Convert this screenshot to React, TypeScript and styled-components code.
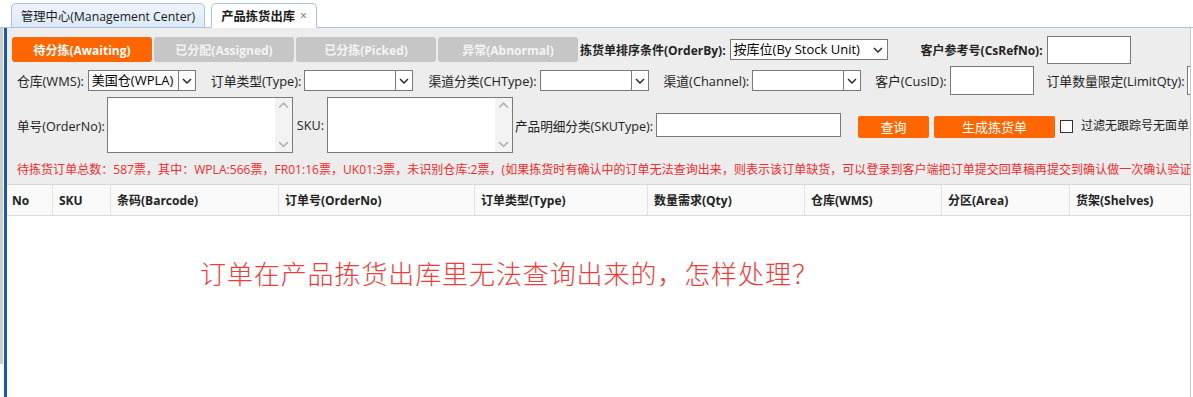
import React from 'react';
import styled, { createGlobalStyle } from 'styled-components';

const GlobalStyle = createGlobalStyle`
  html, body { margin: 0; padding: 0; background: #fff; }
  body { font-family: "Open Sans", "Noto Sans CJK SC", sans-serif; font-size: 12px; color: #222; }
  * { box-sizing: border-box; }
`;

const Page = styled.div`
  width: 1193px;
  height: 397px;
  overflow: hidden;
  display: flex;
  flex-direction: column;
  background: #fff;
`;

const TabBar = styled.div`
  height: 28px;
  flex: none;
  display: flex;
  align-items: flex-end;
  gap: 6px;
  padding-left: 11px;
  border-bottom: 1px solid #a8c2e6;
  background: #fff;
`;

const Tab = styled.div<{ $active?: boolean }>`
  height: 25px;
  margin-bottom: -1px;
  padding: 0 9px;
  display: flex;
  align-items: center;
  gap: 5px;
  border: 1px solid #a8c2e6;
  border-bottom: ${p => (p.$active ? '1px solid #fff' : '1px solid #a8c2e6')};
  border-radius: 5px 5px 0 0;
  background: ${p => (p.$active ? '#fff' : 'linear-gradient(#eef4fd, #dde9f9)')};
  font-size: 12.3px;
  font-weight: ${p => (p.$active ? 700 : 400)};
  color: #1a1a1a;
  white-space: nowrap;
`;

const Close = styled.span`
  font-size: 12px;
  font-weight: 400;
  color: #666;
`;

const Body = styled.div`
  flex: 1;
  display: flex;
  min-height: 0;
`;

const Rail = styled.div`
  width: 7px;
  flex: none;
  display: flex;
  gap: 1px;
`;

const RailGray = styled.div`
  width: 3px;
  height: 336px;
  background: #cdcdcd;
`;

const RailBlue = styled.div`
  width: 3px;
  background: #1d58a6;
`;

const Main = styled.div`
  flex: 1;
  display: flex;
  flex-direction: column;
  border-right: 1px solid #c8c8c8;
  margin-right: 2px;
  min-width: 0;
`;

const Filters = styled.div`
  background: #ededed;
  padding: 8px 0 0 5px;
  height: 157px;
  flex: none;
  overflow: hidden;
  border-bottom: 1px solid #d8d8d8;
`;

const Row = styled.div<{ $h: number; $pl?: number; $mt?: number }>`
  display: flex;
  align-items: center;
  height: ${p => p.$h}px;
  padding-left: ${p => p.$pl ?? 0}px;
  margin-top: ${p => p.$mt ?? 0}px;
  white-space: nowrap;
`;

const StatusButtons = styled.div`
  display: flex;
  gap: 2px;
`;

const StatusButton = styled.div<{ $active?: boolean }>`
  width: 140px;
  height: 25px;
  border-radius: 3px;
  display: flex;
  align-items: center;
  justify-content: center;
  font-size: 12px;
  font-weight: 700;
  color: ${p => (p.$active ? '#fff' : '#f4f4f4')};
  background: ${p => (p.$active ? '#ff6600' : '#c6c6c6')};
`;

const Label = styled.span<{ $bold?: boolean; $ml?: number; $mr?: number; $fs?: number }>`
  font-size: ${p => p.$fs ?? (p.$bold ? 12 : 12.6)}px;
  font-weight: ${p => (p.$bold ? 700 : 400)};
  color: #222;
  flex: none;
  margin-left: ${p => p.$ml ?? 0}px;
  margin-right: ${p => p.$mr ?? 3}px;
`;

const SelectBox = styled.div<{ $w: number }>`
  width: ${p => p.$w}px;
  height: 21px;
  flex: none;
  background: #fff;
  border: 1px solid #7a7a7a;
  display: flex;
  align-items: stretch;
  font-size: 13px;
  color: #000;
`;

const SelectText = styled.span`
  flex: 1;
  overflow: hidden;
  padding-left: 3px;
  line-height: 19px;
  white-space: nowrap;
`;

const ArrowBox = styled.span<{ $boxed?: boolean }>`
  width: 17px;
  flex: none;
  display: flex;
  align-items: center;
  justify-content: center;
  border-left: ${p => (p.$boxed ? '1px solid #7a7a7a' : 'none')};
  background: #fff;
`;

const TextInput = styled.div<{ $w: number; $h: number }>`
  width: ${p => p.$w}px;
  height: ${p => p.$h}px;
  flex: none;
  background: #fff;
  border: 1px solid #7a7a7a;
`;

const TextArea = styled.div`
  width: 186px;
  height: 56px;
  flex: none;
  background: #fff;
  border: 1px solid #7a7a7a;
  display: flex;
  justify-content: flex-end;
`;

const ScrollTrack = styled.div`
  width: 17px;
  background: #f3f3f3;
  display: flex;
  flex-direction: column;
  justify-content: space-between;
  align-items: center;
  padding: 4px 0;
`;

const ActionButton = styled.div<{ $w: number; $ml: number }>`
  width: ${p => p.$w}px;
  height: 22px;
  flex: none;
  margin-left: ${p => p.$ml}px;
  margin-top: 3px;
  border-radius: 2px;
  background: #ff6600;
  color: #fff;
  font-size: 13px;
  display: flex;
  align-items: center;
  justify-content: center;
`;

const CheckBox = styled.span`
  width: 13px;
  height: 13px;
  margin-left: 5px;
  margin-top: 3px;
  border: 1px solid #333;
  background: #fff;
  flex: none;
`;

const Notice = styled.div`
  height: 30px;
  padding-left: 5px;
  margin-top: 1px;
  display: flex;
  align-items: center;
  color: #f22b2b;
  font-size: 12px;
  letter-spacing: 0.04px;
  white-space: nowrap;
`;

const HeaderRow = styled.div`
  display: grid;
  grid-template-columns: 45px 58px 168px 196px 173px 157px 137px 128px 1fr;
  height: 31px;
  background: #fafafa;
  border-bottom: 1px solid #dcdcdc;
  flex: none;
`;

const HeaderCell = styled.div<{ $first?: boolean }>`
  display: flex;
  align-items: center;
  padding-left: ${p => (p.$first ? 5 : 6)}px;
  border-left: ${p => (p.$first ? 'none' : '1px solid #e2e2e2')};
  font-size: 12px;
  font-weight: 700;
  color: #222;
  white-space: nowrap;
`;

const Grid = styled.div`
  flex: 1;
  background: #fff;
  padding: 38px 0 0 193px;
`;

const Question = styled.div`
  font-family: "Noto Sans CJK SC", sans-serif;
  font-size: 26px;
  font-weight: 300;
  letter-spacing: 0.9px;
  color: #ee3d3d;
  white-space: nowrap;
`;

const Chevron = ({ up = false, color = '#222', w = 10 }: { up?: boolean; color?: string; w?: number }) => (
  <svg width={w} height={w * 0.6} viewBox="0 0 10 6">
    <polyline
      points={up ? '1,5 5,1 9,5' : '1,1 5,5 9,1'}
      fill="none"
      stroke={color}
      strokeWidth="1.4"
    />
  </svg>
);

const Select = ({ w, text = '', boxed = true }: { w: number; text?: string; boxed?: boolean }) => (
  <SelectBox $w={w}>
    <SelectText>{text}</SelectText>
    <ArrowBox $boxed={boxed}>
      <Chevron />
    </ArrowBox>
  </SelectBox>
);

const Area = () => (
  <TextArea>
    <ScrollTrack>
      <Chevron up color="#b0b0b0" w={11} />
      <Chevron color="#b0b0b0" w={11} />
    </ScrollTrack>
  </TextArea>
);

const columns = ['No', 'SKU', '条码(Barcode)', '订单号(OrderNo)', '订单类型(Type)', '数量需求(Qty)', '仓库(WMS)', '分区(Area)', '货架(Shelves)'];

export default function App() {
  return (
    <Page>
      <GlobalStyle />
      <TabBar>
        <Tab>管理中心(Management Center)</Tab>
        <Tab $active>
          产品拣货出库<Close>×</Close>
        </Tab>
      </TabBar>
      <Body>
        <Rail>
          <RailGray />
          <RailBlue />
        </Rail>
        <Main>
          <Filters>
            <Row $h={27}>
              <StatusButtons>
                <StatusButton $active>待分拣(Awaiting)</StatusButton>
                <StatusButton>已分配(Assigned)</StatusButton>
                <StatusButton>已分拣(Picked)</StatusButton>
                <StatusButton>异常(Abnormal)</StatusButton>
              </StatusButtons>
              <Label $bold $ml={2} $mr={4}>拣货单排序条件(OrderBy):</Label>
              <Select w={158} text="按库位(By Stock Unit)" boxed={false} />
              <Label $bold $ml={33} $mr={4}>客户参考号(CsRefNo):</Label>
              <TextInput $w={84} $h={28} />
            </Row>
            <Row $h={29} $pl={5} $mt={3}>
              <Label $fs={12.8} $mr={4}>仓库(WMS):</Label>
              <Select w={108} text="美国仓(WPLA)" />
              <Label $fs={12.8} $ml={15}>订单类型(Type):</Label>
              <Select w={109} />
              <Label $fs={12.8} $ml={15}>渠道分类(CHType):</Label>
              <Select w={109} />
              <Label $fs={12.8} $ml={15}>渠道(Channel):</Label>
              <Select w={109} />
              <Label $fs={12.8} $ml={14}>客户(CusID):</Label>
              <TextInput $w={84} $h={29} />
              <Label $fs={12.8} $ml={13} $mr={2}>订单数量限定(LimitQty):</Label>
              <TextInput $w={84} $h={29} />
            </Row>
            <Row $h={56} $pl={5} $mt={2}>
              <Label $mr={2}>单号(OrderNo):</Label>
              <Area />
              <Label $ml={4}>SKU:</Label>
              <Area />
              <Label $ml={2} $mr={3}>产品明细分类(SKUType):</Label>
              <TextInput $w={185} $h={24} />
              <ActionButton $w={71} $ml={17}>查询</ActionButton>
              <ActionButton $w={121} $ml={5}>生成拣货单</ActionButton>
              <CheckBox />
              <Label $fs={12} $ml={8}>过滤无跟踪号无面单</Label>
            </Row>
            <Notice>
              待拣货订单总数：587票，其中：WPLA:566票，FR01:16票，UK01:3票，未识别仓库:2票，(如果拣货时有确认中的订单无法查询出来，则表示该订单缺货，可以登录到客户端把订单提交回草稿再提交到确认做一次确认验证)
            </Notice>
          </Filters>
          <HeaderRow>
            {columns.map((c, i) => (
              <HeaderCell key={c} $first={i === 0}>{c}</HeaderCell>
            ))}
          </HeaderRow>
          <Grid>
            <Question>订单在产品拣货出库里无法查询出来的，怎样处理？</Question>
          </Grid>
        </Main>
      </Body>
    </Page>
  );
}
